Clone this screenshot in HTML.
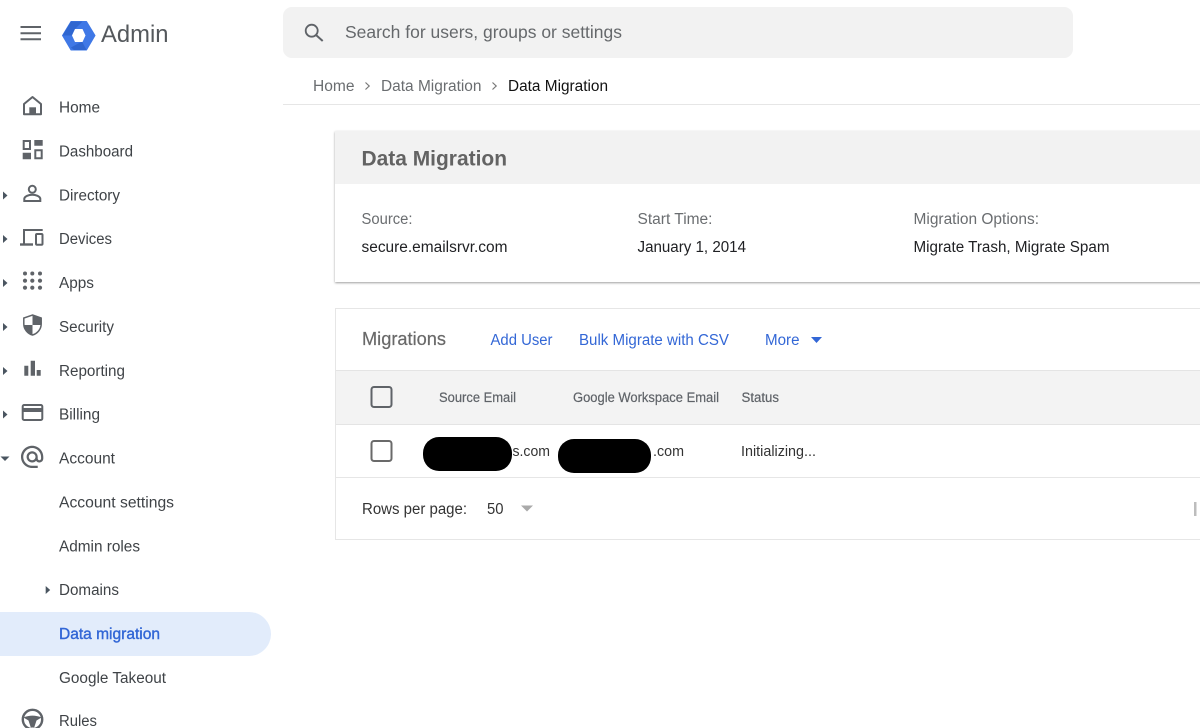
<!DOCTYPE html>
<html lang="en">
<head>
<meta charset="utf-8">
<title>Admin - Data Migration</title>
<style>
html,body{margin:0;padding:0;background:#fff;width:1200px;height:728px;overflow:hidden}
svg{position:absolute;left:0;top:0;display:block;filter:blur(.35px)}
text{font-family:"Liberation Sans",sans-serif;font-size:15.5px;fill:#3c4043}
.nav{fill:#3f4347}
.g{fill:#6a6d70}
.k{fill:#202124}
.b{fill:#3367d6}
.h{fill:#5f6368;font-size:13.5px;stroke:#5f6368;stroke-width:.2px}
.ic{fill:#5f6368}
.ar{fill:#4a5560}
</style>
</head>
<body>
<svg width="1200" height="728" viewBox="0 0 1200 728" xmlns="http://www.w3.org/2000/svg">
<!-- top -->
<path d="M20.500 26h20.500v2H20.500zM20.500 32.300h20.500v2H20.500zM20.500 38.300h20.500v2H20.500z" class="ic"/>
<path d="M62.500 35.500L71 21.500h15.500l8.500 14-8.500 14.500H71z" fill="#3f78e6" stroke="#3f78e6" stroke-linejoin="round"/>
<path d="M71 21.500h11.500L75 29l-3.500 6.500h-9z" fill="#2f66d0"/>
<path d="M82 41.500l4.500 8.500H74l-3-2.500 11-6z" fill="#2f66d0"/>
<path d="M72 35.500L75 29h7.500l3 6.500-3 6.500H75z" fill="#fff"/>
<text x="101" y="42" textLength="67.500" lengthAdjust="spacingAndGlyphs" style="font-size:24.500px;fill:#54585c">Admin</text>

<rect x="283" y="7" width="790" height="51" rx="9" fill="#f2f2f2"/>
<circle cx="311.700" cy="30.700" r="6" fill="none" stroke="#5f6368" stroke-width="1.800"/>
<path d="M316 35l6.700 6" stroke="#5f6368" stroke-width="2" fill="none"/>
<text x="345" y="38" textLength="277" lengthAdjust="spacingAndGlyphs" style="font-size:17.500px;fill:#65686b">Search for users, groups or settings</text>

<!-- breadcrumb -->
<text x="313" y="91" textLength="41.500" lengthAdjust="spacingAndGlyphs" class="g">Home</text>
<path d="M365.500 82.500l3.700 3.500-3.700 3.500" fill="none" stroke="#777" stroke-width="1.200"/>
<text x="381" y="91" textLength="100.500" lengthAdjust="spacingAndGlyphs" class="g">Data Migration</text>
<path d="M492.500 82.500l3.700 3.500-3.700 3.500" fill="none" stroke="#777" stroke-width="1.200"/>
<text x="508" y="91" textLength="100" lengthAdjust="spacingAndGlyphs" style="fill:#111">Data Migration</text>
<rect x="283" y="104" width="917" height="1" fill="#e6e6e6"/>

<!-- sidebar -->
<path d="M0 612h249a22 22 0 0 1 0 44H0z" fill="#e2ecfb"/>
<text x="59" y="112.500" textLength="41" lengthAdjust="spacingAndGlyphs" class="nav">Home</text>
<text x="59" y="156.500" textLength="74" lengthAdjust="spacingAndGlyphs" class="nav">Dashboard</text>
<text x="59" y="200.500" textLength="61" lengthAdjust="spacingAndGlyphs" class="nav">Directory</text>
<text x="59" y="244" textLength="53" lengthAdjust="spacingAndGlyphs" class="nav">Devices</text>
<text x="59" y="288" textLength="35" lengthAdjust="spacingAndGlyphs" class="nav">Apps</text>
<text x="59" y="332" textLength="55" lengthAdjust="spacingAndGlyphs" class="nav">Security</text>
<text x="59" y="376" textLength="66" lengthAdjust="spacingAndGlyphs" class="nav">Reporting</text>
<text x="59" y="419.500" textLength="41" lengthAdjust="spacingAndGlyphs" class="nav">Billing</text>
<text x="59" y="463.500" textLength="56" lengthAdjust="spacingAndGlyphs" class="nav">Account</text>
<text x="59" y="507.500" textLength="115" lengthAdjust="spacingAndGlyphs" class="nav">Account settings</text>
<text x="59" y="551.500" textLength="81" lengthAdjust="spacingAndGlyphs" class="nav">Admin roles</text>
<text x="59" y="595" textLength="60" lengthAdjust="spacingAndGlyphs" class="nav">Domains</text>
<text x="59" y="639" textLength="101" lengthAdjust="spacingAndGlyphs" class="b" style="stroke:#3367d6;stroke-width:.4px">Data migration</text>
<text x="59" y="683" textLength="107" lengthAdjust="spacingAndGlyphs" class="nav">Google Takeout</text>
<text x="59" y="726" textLength="38" lengthAdjust="spacingAndGlyphs" class="nav">Rules</text>

<!-- nav icons -->
<path d="M32.500 97L41 104v10.300H24V104z" fill="none" stroke="#5f6368" stroke-width="2" stroke-linejoin="round"/>
<rect x="29.300" y="107.300" width="6.700" height="7.500" class="ic"/>
<path d="M23.700 141h6.300v8h-6.300zM35.300 150.300h6.400v8h-6.400z" fill="none" stroke="#5f6368" stroke-width="2"/>
<path d="M34.300 140h8.400v5.700h-8.400zM22.700 152.700H31v6.600h-8.300z" class="ic"/>
<circle cx="32.300" cy="189.300" r="3.500" fill="none" stroke="#5f6368" stroke-width="2"/>
<path d="M24.300 201v-2c0-2.800 4.800-4.300 8-4.300s8 1.500 8 4.300v2z" fill="none" stroke="#5f6368" stroke-width="2"/>
<path d="M24 244v-14h18.700" fill="none" stroke="#5f6368" stroke-width="2"/>
<rect x="20" y="243.300" width="13" height="2.400" class="ic"/>
<rect x="36" y="234" width="6.500" height="10.700" rx="1" fill="none" stroke="#5f6368" stroke-width="2"/>
<g class="ic">
<circle cx="25" cy="273.500" r="2"/><circle cx="32.300" cy="273.500" r="2"/><circle cx="40" cy="273.500" r="2"/>
<circle cx="25" cy="280.700" r="2.100"/><circle cx="32.300" cy="280.700" r="2.100"/><circle cx="40" cy="280.700" r="2.100"/>
<circle cx="25" cy="287.700" r="2.100"/><circle cx="32.300" cy="287.700" r="2.100"/><circle cx="40" cy="287.700" r="2.100"/>
</g>
<path d="M32.500 315l8.700 3v6c0 5-3.700 9.600-8.700 11-5-1.400-8.700-6-8.700-11v-6z" fill="none" stroke="#5f6368" stroke-width="1.500"/>
<path d="M32.500 315l8.700 3v7h-8.700zM32.500 325v10c-5-1.400-8.700-5.500-8.700-10z" class="ic"/>
<path d="M24.300 365.700h4v10h-4zM30.700 360.700H35v15h-4.300zM36.700 370h4v5.700h-4z" class="ic"/>
<rect x="22.700" y="405" width="19.600" height="15" rx="1.500" fill="none" stroke="#5f6368" stroke-width="2"/>
<rect x="22.700" y="408" width="19.600" height="4" class="ic"/>
<path transform="translate(18.770 443.500) scale(1.115)" class="ic" d="M12 2C6.480 2 2 6.480 2 12s4.480 10 10 10h5v-2h-5c-4.340 0-8-3.660-8-8s3.660-8 8-8 8 3.660 8 8v1.430c0 .79-.71 1.570-1.500 1.570s-1.500-.78-1.500-1.570V12c0-2.760-2.240-5-5-5s-5 2.240-5 5 2.240 5 5 5c1.380 0 2.640-.56 3.540-1.470.65.89 1.770 1.470 2.960 1.470 1.970 0 3.500-1.600 3.500-3.570V12c0-5.520-4.480-10-10-10zm0 13c-1.660 0-3-1.340-3-3s1.340-3 3-3 3 1.340 3 3-1.340 3-3 3z"/>
<circle cx="32.500" cy="719.500" r="9.700" fill="none" stroke="#5f6368" stroke-width="2.400"/>
<path d="M23.500 717.500c3-1.300 6-1.900 9-1.900s6 .6 9 1.900l-5 3-2.300 7h-3.400l-2.300-7z" class="ic"/>

<!-- nav arrows -->
<g class="ar">
<path d="M3 191.500l4.500 4-4.500 4z"/>
<path d="M3 235l4.500 4-4.500 4z"/>
<path d="M3 279l4.500 4-4.500 4z"/>
<path d="M3 323l4.500 4-4.500 4z"/>
<path d="M3 367l4.500 4-4.500 4z"/>
<path d="M3 410.500l4.500 4-4.500 4z"/>
<path d="M0.500 456.500h9l-4.500 4.500z"/>
<path d="M45.700 586l4.500 4-4.500 4z"/>
</g>

<!-- summary card -->
<rect x="335" y="131" width="870" height="151" fill="#fff" style="filter:drop-shadow(0 1px 1px rgba(0,0,0,.38))"/>
<rect x="335" y="131" width="865" height="53" fill="#f2f2f2"/>
<text x="361.500" y="165.500" textLength="145.500" lengthAdjust="spacingAndGlyphs" style="font-size:21.500px;font-weight:700;fill:#636363">Data Migration</text>
<text x="361.500" y="224" textLength="51" lengthAdjust="spacingAndGlyphs" class="g">Source:</text>
<text x="361.500" y="252" textLength="146" lengthAdjust="spacingAndGlyphs" class="k">secure.emailsrvr.com</text>
<text x="637.500" y="224" textLength="75" lengthAdjust="spacingAndGlyphs" class="g">Start Time:</text>
<text x="637.500" y="252" textLength="108.500" lengthAdjust="spacingAndGlyphs" class="k">January 1, 2014</text>
<text x="913.500" y="224" textLength="125.500" lengthAdjust="spacingAndGlyphs" class="g">Migration Options:</text>
<text x="913.500" y="252" textLength="196" lengthAdjust="spacingAndGlyphs" class="k">Migrate Trash, Migrate Spam</text>

<!-- migrations card -->
<rect x="335.500" y="308.500" width="870" height="231" fill="#fff" stroke="#e6e6e6"/>
<text x="362" y="345" textLength="84" lengthAdjust="spacingAndGlyphs" style="font-size:18px;fill:#696969;stroke:#696969;stroke-width:.2px">Migrations</text>
<text x="490.500" y="345" textLength="62" lengthAdjust="spacingAndGlyphs" class="b">Add User</text>
<text x="579" y="345" textLength="150" lengthAdjust="spacingAndGlyphs" class="b">Bulk Migrate with CSV</text>
<text x="765" y="345" textLength="34.500" lengthAdjust="spacingAndGlyphs" class="b">More</text>
<path d="M811 337h11l-5.500 6z" fill="#3367d6"/>

<rect x="336" y="370" width="864" height="55" fill="#f3f3f3"/>
<rect x="336" y="370" width="864" height="1" fill="#e4e4e4"/>
<rect x="336" y="424" width="864" height="1" fill="#e4e4e4"/>
<rect x="371.500" y="387" width="20" height="20" rx="2.500" fill="none" stroke="#5f6368" stroke-width="2"/>
<text x="439" y="402" textLength="77" lengthAdjust="spacingAndGlyphs" class="h">Source Email</text>
<text x="573" y="402" textLength="146" lengthAdjust="spacingAndGlyphs" class="h">Google Workspace Email</text>
<text x="741.500" y="402" textLength="37.500" lengthAdjust="spacingAndGlyphs" class="h">Status</text>

<rect x="371.500" y="441" width="20" height="20" rx="2.500" fill="none" stroke="#6a6a6a" stroke-width="2"/>
<text x="512.500" y="456" textLength="37.500" lengthAdjust="spacingAndGlyphs" style="font-size:14.500px;fill:#333">s.com</text>
<text x="653" y="456" textLength="31" lengthAdjust="spacingAndGlyphs" style="font-size:14.500px;fill:#333">.com</text>
<text x="741" y="456" textLength="75" lengthAdjust="spacingAndGlyphs" style="font-size:14.500px;fill:#333">Initializing...</text>
<rect x="423" y="437" width="89" height="34" rx="16" fill="#000"/>
<rect x="558" y="439" width="93" height="34" rx="16" fill="#000"/>
<rect x="336" y="477" width="864" height="1" fill="#e6e6e6"/>

<text x="362" y="514" textLength="105" lengthAdjust="spacingAndGlyphs" style="fill:#333">Rows per page:</text>
<text x="487" y="514" textLength="16.500" lengthAdjust="spacingAndGlyphs" style="fill:#333">50</text>
<path d="M521 505.500h12l-6 6z" fill="#aaa"/>
<rect x="1194" y="502" width="2.500" height="14" fill="#bdbdbd"/>
</svg>
</body>
</html>
